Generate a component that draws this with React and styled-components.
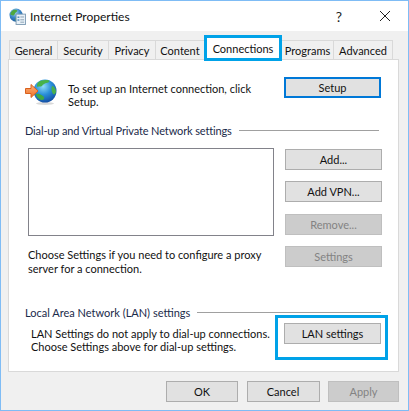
import React from "react";
import styled, { createGlobalStyle } from "styled-components";

const GlobalStyle = createGlobalStyle`
  html, body {
    margin: 0;
    padding: 0;
    background: #fff;
  }
  * {
    box-sizing: border-box;
  }
`;

const tabs = [
  { title: "General", width: 49 },
  { title: "Security", width: 52 },
  { title: "Privacy", width: 48 },
  { title: "Content", width: 50 },
];

const TitleIcon = () => (
  <svg width="17" height="17" viewBox="0 0 18 18">
    <defs>
      <radialGradient id="smallGlobe" cx="0.4" cy="0.3" r="0.8">
        <stop offset="0" stopColor="#a6d8f5" />
        <stop offset="0.5" stopColor="#3a86c8" />
        <stop offset="1" stopColor="#14508f" />
      </radialGradient>
    </defs>
    <circle cx="7.5" cy="7.5" r="7" fill="url(#smallGlobe)" />
    <path d="M3 3.5 C5 1.5 8 1.5 9 3 C8 5 6.5 4.5 6 6.5 C5 8.5 3 8 1.5 7 C1.5 5.5 2 4.5 3 3.5Z" fill="#4ea83e" />
    <path d="M7 10 C9 9.5 10 11 9.5 13 L7.5 14 C6.5 12.5 6.5 11 7 10Z" fill="#4ea83e" />
    <rect x="7.5" y="6.5" width="10" height="11" fill="#e8f1f8" stroke="#7f9db5" />
    <rect x="9" y="9" width="2" height="1.5" fill="#4d87b8" />
    <rect x="12" y="9" width="4" height="1" fill="#8aa0b2" />
    <rect x="9" y="12" width="2" height="1.5" fill="#4d87b8" />
    <rect x="12" y="12" width="4" height="1" fill="#8aa0b2" />
    <rect x="12" y="14.5" width="4" height="1" fill="#8aa0b2" />
  </svg>
);

const GlobeIcon = () => (
  <svg width="33" height="27" viewBox="0 0 33 27">
    <defs>
      <radialGradient id="bigGlobe" cx="0.42" cy="0.3" r="0.8">
        <stop offset="0" stopColor="#8fdcf8" />
        <stop offset="0.45" stopColor="#2a8fd8" />
        <stop offset="1" stopColor="#0d3f98" />
      </radialGradient>
      <linearGradient id="arrowFill" x1="0" y1="0" x2="0" y2="1">
        <stop offset="0" stopColor="#fbb27c" />
        <stop offset="1" stopColor="#ee6f25" />
      </linearGradient>
    </defs>
    <ellipse cx="20" cy="24.5" rx="9" ry="1.5" fill="#d8d8d8" />
    <circle cx="20" cy="12" r="11.5" fill="url(#bigGlobe)" />
    <path d="M13 3.5 C16 1 21 0.5 24 1.5 C25 3 23 4 21 4 C19.5 5 18 5 17 7 C15.5 8 14 7 12.5 8 C11.5 6.5 12 5 13 3.5Z" fill="#47b24a" />
    <path d="M10.5 15 C13 14 17 15.5 19 18 C20 20 18 21.5 16 21 C13.5 20 11.5 18 10.5 15Z" fill="#3fa845" />
    <path d="M27 7 C29 7 31 10 31 13 C30 16 28.5 16 27.5 14 C26.5 12 26 9 27 7Z" fill="#49b04b" />
    <path d="M0.5 9.5 H6 V5.5 L13 12 L6 18.5 V14.5 H0.5Z" fill="url(#arrowFill)" stroke="#d9601c" strokeWidth="1" />
  </svg>
);

const CloseIcon = () => (
  <svg width="12" height="12" viewBox="0 0 12 12">
    <path d="M1 1 L11 11 M11 1 L1 11" stroke="#222" strokeWidth="1" fill="none" />
  </svg>
);

const App = () => {
  return (
    <Window>
      <GlobalStyle />
      <TitleBar>
        <TitleIcon />
        <TitleText>Internet Properties</TitleText>
        <HelpMark>?</HelpMark>
        <CloseBox>
          <CloseIcon />
        </CloseBox>
      </TitleBar>

      <Body>
        <TabStrip>
          {tabs.map((tab) => (
            <Tab key={tab.title} $width={tab.width}>
              {tab.title}
            </Tab>
          ))}
          <ActiveTab>Connections</ActiveTab>
          <Tab $width={53}>Programs</Tab>
          <Tab $width={60}>Advanced</Tab>
        </TabStrip>

        <Panel>
          <SetupRow>
            <GlobeWrap>
              <GlobeIcon />
            </GlobeWrap>
            <SetupText>
              To set up an Internet connection, click
              <br />
              Setup.
            </SetupText>
            <SetupButton>Setup</SetupButton>
          </SetupRow>

          <DialHeading>
            <span>Dial-up and Virtual Private Network settings</span>
          </DialHeading>

          <DialRow>
            <DialLeft>
              <ListBox />
              <ProxyText>
                Choose Settings if you need to configure a proxy
                <br />
                server for a connection.
              </ProxyText>
            </DialLeft>
            <ButtonColumn>
              <Button>Add...</Button>
              <Button>Add VPN...</Button>
              <Button $disabled>Remove...</Button>
              <Button $disabled>Settings</Button>
            </ButtonColumn>
          </DialRow>

          <LanHeading>
            <span>Local Area Network (LAN) settings</span>
          </LanHeading>

          <LanRow>
            <LanText>
              LAN Settings do not apply to dial-up connections.
              <br />
              Choose Settings above for dial-up settings.
            </LanText>
            <LanButtonWrap>
              <Button>LAN settings</Button>
              <Highlight />
            </LanButtonWrap>
          </LanRow>
        </Panel>

        <Footer>
          <FooterButton $width={72}>OK</FooterButton>
          <FooterButton $width={73}>Cancel</FooterButton>
          <FooterButton $width={71} $disabled>
            Apply
          </FooterButton>
        </Footer>
      </Body>
    </Window>
  );
};

const Window = styled.div`
  width: 409px;
  height: 411px;
  display: flex;
  flex-direction: column;
  border: 1px solid #7fbcf5;
  background: #f0f0f0;
  font-family: "Lato", "Noto Sans", sans-serif;
  font-size: 11px;
  color: #111;
  overflow: hidden;
`;

const TitleBar = styled.div`
  height: 30px;
  flex: none;
  display: flex;
  align-items: center;
  padding-left: 8px;
  background: #fff;
`;

const TitleText = styled.span`
  margin-left: 4px;
  flex: 1;
  font-size: 12px;
  color: #111;
`;

const HelpMark = styled.span`
  width: 12px;
  margin-right: 34px;
  font-size: 14px;
  text-align: center;
  color: #222;
`;

const CloseBox = styled.span`
  width: 12px;
  height: 12px;
  margin-right: 17px;
  display: flex;
`;

const Body = styled.div`
  flex: 1;
  display: flex;
  flex-direction: column;
  padding: 9px 9px 0 7px;
`;

const TabStrip = styled.div`
  height: 19px;
  flex: none;
  display: flex;
  align-items: flex-end;
  padding-left: 2px;
  position: relative;
  z-index: 1;
`;

const Tab = styled.div`
  width: ${(props) => props.$width}px;
  height: 19px;
  margin-left: -1px;
  display: flex;
  align-items: center;
  justify-content: center;
  background: #f0f0f0;
  border: 1px solid #d9d9d9;
  border-bottom: none;
`;

const ActiveTab = styled.div`
  width: 78px;
  height: 26px;
  margin-left: -1px;
  position: relative;
  z-index: 1;
  top: 2px;
  display: flex;
  align-items: center;
  justify-content: center;
  background: #fff;
  border: 3px solid #00a2e8;
`;

const Panel = styled.div`
  height: 313px;
  flex: none;
  display: flex;
  flex-direction: column;
  padding: 17px 17px 0 0;
  background: #fff;
  border: 1px solid #d9d9d9;
`;

const SetupRow = styled.div`
  height: 45px;
  flex: none;
  display: flex;
  align-items: flex-start;
`;

const GlobeWrap = styled.div`
  width: 33px;
  height: 27px;
  margin: 2px 10px 0 16px;
  flex: none;
  display: flex;
`;

const SetupText = styled.div`
  flex: 1;
  line-height: 13px;
  padding-top: 5px;
  white-space: nowrap;
`;

const Button = styled.div`
  width: 97px;
  height: 21px;
  flex: none;
  display: flex;
  align-items: center;
  justify-content: center;
  background: ${(props) => (props.$disabled ? "#cccccc" : "#e1e1e1")};
  border: 1px solid ${(props) => (props.$disabled ? "#bfbfbf" : "#adadad")};
  color: ${(props) => (props.$disabled ? "#838383" : "#111")};
  white-space: nowrap;
`;

const SetupButton = styled(Button)`
  border: 2px solid #0078d7;
`;

const Heading = styled.div`
  height: 16px;
  flex: none;
  display: flex;
  align-items: center;
  gap: 7px;
  padding-left: 16px;
  white-space: nowrap;
  color: #1a2a4a;

  &::after {
    content: "";
    flex: 1;
    height: 1px;
    background: #a0a0a0;
  }
`;

const DialHeading = styled(Heading)`
  margin-right: 2px;
  letter-spacing: -0.14px;
`;

const LanHeading = styled(Heading)`
  margin-top: 28px;
`;

const DialRow = styled.div`
  display: flex;
  margin: 10px -1px 0 19px;
  justify-content: space-between;
`;

const DialLeft = styled.div`
  width: 246px;
  display: flex;
  flex-direction: column;
`;

const ListBox = styled.div`
  width: 246px;
  height: 88px;
  background: #fff;
  border: 1px solid #82828a;
`;

const ProxyText = styled.div`
  margin-top: 12px;
  line-height: 14px;
  white-space: nowrap;
`;

const ButtonColumn = styled.div`
  display: flex;
  flex-direction: column;
  gap: 11.33px;
  padding-top: 1px;
`;

const LanRow = styled.div`
  display: flex;
  justify-content: space-between;
  padding: 3px 0 0 22px;
`;

const LanText = styled.div`
  margin-top: 4px;
  line-height: 13px;
  white-space: nowrap;
`;

const LanButtonWrap = styled.div`
  position: relative;
`;

const Highlight = styled.div`
  position: absolute;
  top: -8px;
  left: -9px;
  right: -7px;
  bottom: -7px;
  border: 3px solid #00a2e8;
`;

const Footer = styled.div`
  display: flex;
  justify-content: flex-end;
  gap: 8.5px;
  margin-top: 9px;
`;

const FooterButton = styled(Button)`
  width: ${(props) => props.$width}px;
`;

export default App;
